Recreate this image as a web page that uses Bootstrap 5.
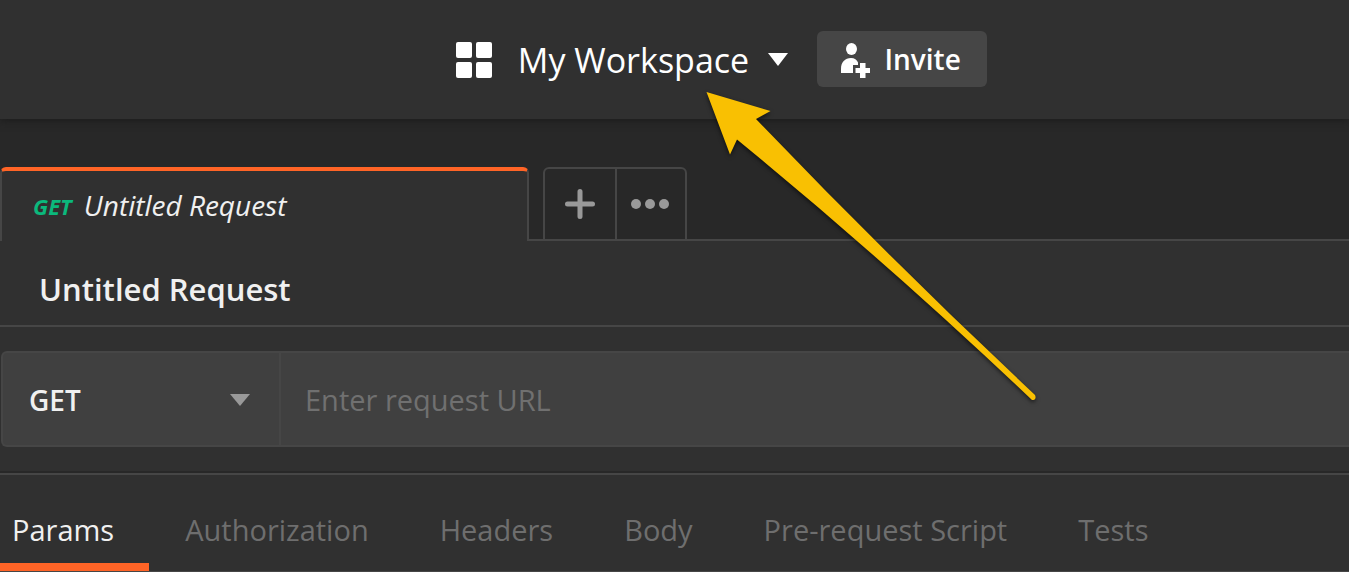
<!DOCTYPE html>
<html lang="en">
<head>
<meta charset="utf-8">
<meta name="viewport" content="width=device-width, initial-scale=1">
<title>My Workspace</title>
<link href="https://cdn.jsdelivr.net/npm/bootstrap@5.3.0/dist/css/bootstrap.min.css" rel="stylesheet">
<style>
  body { background: #303030; color: #f0f0f0; font-family: "Open Sans", "Noto Sans", sans-serif; font-size: 29px; line-height: 40px; overflow-x: hidden; }
  button, input, select { font: inherit; }
  .app-header { height: 119px; padding: 0 0 2px 94px; box-shadow: 0 1px 8px #1a1a1a; z-index: 1; }
  .workspace-btn { color: #fff; font-size: 34px; line-height: 48px; gap: 19px; padding-top: 2px; }
  .workspace-btn .grid-icon { margin-right: 7px; }
  .invite-btn { background: #464646; color: #fff; font-size: 28px; font-weight: 600; height: 56px; width: 170px; border-radius: 6px; margin-left: 29px; padding: 0 4px 0 0; gap: 15px; }
  .tab-strip { background: #282828; padding-top: 48px; }
  .request-tab { width: 529px; height: 74px; margin: 0; padding: 0 0 2px 31px; gap: 12px; background: #303030; border: 2px solid #464646; border-top: 4px solid #ff6426; border-bottom: 0; border-radius: 6px 6px 0 0; font-size: 28px; font-style: italic; color: #f0f0f0; }
  .request-tab .verb { color: #0bb87c; font-size: 22px; font-weight: 700; padding-top: 2px; }
  .strip-gap { width: 14px; border-bottom: 2px solid #464646; }
  .strip-actions { border: 2px solid #464646; border-radius: 6px 6px 0 0; }
  .strip-actions button { width: 70px; }
  .strip-actions button + button { border-left: 2px solid #464646 !important; }
  .request-title { height: 86px; padding: 14px 39px 0; border-bottom: 2px solid #464646; font-size: 31px; font-weight: 600; }
  .url-area { padding: 24px 0 24px 1px; border-bottom: 2px solid #282828; }
  .url-bar { height: 96px; background: #404040; border: 2px solid #464646; border-right: 0; border-radius: 6px 0 0 6px; }
  .method { width: 278px; border-right: 2px solid #464646; padding-top: 2px; }
  .method select { appearance: none; background: transparent; color: #f0f0f0; font-size: 28px; font-weight: 600; padding: 0 26px; }
  .method svg { right: 29px; }
  .url-bar input { background: transparent; color: #f0f0f0; padding: 2px 24px 0; }
  .url-bar input::placeholder { color: #707070; opacity: 1; }
  .param-tabs { border-top: 2px solid #464646; border-bottom: 1px solid #464646; height: 99px; overflow: hidden; }
  .param-tabs a { color: #6e6e6e; text-decoration: none; padding: 35px 35px 13px 36px; border-bottom: 8px solid transparent; white-space: nowrap; }
  .param-tabs a.active { color: #f0f0f0; padding-left: 12px; border-color: #ff6426; }
  .pointer-arrow { left: 700px; top: 85px; z-index: 5; filter: drop-shadow(0 2px 2px #0009); pointer-events: none; }
</style>
</head>
<body>
<header class="app-header d-flex align-items-center justify-content-center position-relative">
  <button class="workspace-btn btn px-0 pb-0 border-0 d-flex align-items-center" type="button">
    <svg class="grid-icon" width="36" height="36" fill="#fff" aria-hidden="true"><rect width="16" height="16" rx="2"/><rect x="20" width="16" height="16" rx="2"/><rect y="20" width="16" height="16" rx="2"/><rect x="20" y="20" width="16" height="16" rx="2"/></svg>
    <span>My Workspace</span>
    <svg width="20" height="13" fill="#fff" aria-hidden="true"><path d="M0 0H20L10 13Z"/></svg>
  </button>
  <button class="invite-btn btn border-0 d-flex align-items-center justify-content-center" type="button">
    <svg width="30" height="36" overflow="visible" fill="#fff" aria-hidden="true"><ellipse cx="11.500" cy="8" rx="5.500" ry="6"/><path d="M1 32V28C1 21 5 17 11 17C14.500 17 17 19 18 21.500V24H13V32Z"/><path d="M20 22H25.500V27H30V32H25.500V37H20V32H15.500V27H20Z"/></svg>
    <span>Invite</span>
  </button>
</header>
<main>
  <div class="tab-strip d-flex">
    <button class="request-tab d-flex align-items-center" type="button"><span class="verb">GET</span><span>Untitled Request</span></button>
    <div class="strip-gap"></div>
    <div class="strip-actions d-flex">
      <button class="btn p-0 border-0 rounded-0" type="button" aria-label="New tab"><svg class="d-block mx-auto" width="30" height="30" stroke="#999" stroke-width="5" stroke-linecap="round"><path d="M15 2.500V27.500M2.500 15H27.500"/></svg></button>
      <button class="btn p-0 border-0 rounded-0" type="button" aria-label="More options"><svg class="d-block mx-auto" width="40" height="10" fill="#999"><circle cx="5" cy="5" r="5"/><circle cx="19" cy="5" r="5"/><circle cx="33" cy="5" r="5"/></svg></button>
    </div>
    <div class="strip-gap flex-grow-1"></div>
  </div>
  <h1 class="request-title d-flex align-items-center m-0">Untitled Request</h1>
  <div class="url-area">
    <div class="url-bar d-flex">
      <div class="method position-relative d-flex align-items-center flex-shrink-0">
        <select class="w-100 h-100 border-0" aria-label="Method"><option>GET</option><option>POST</option></select>
        <svg class="position-absolute" width="20" height="12" fill="#999" aria-hidden="true"><path d="M0 0H20L10 12Z"/></svg>
      </div>
      <input class="flex-grow-1 border-0" type="text" placeholder="Enter request URL" aria-label="Request URL">
    </div>
  </div>
  <nav class="param-tabs d-flex">
    <a class="active" href="#">Params</a><a href="#">Authorization</a><a href="#">Headers</a><a href="#">Body</a><a href="#">Pre-request Script</a><a href="#">Tests</a>
  </nav>
</main>
<svg class="pointer-arrow position-absolute" width="345" height="325" fill="#f9c002" aria-hidden="true"><path d="M6.500 7L70.500 26L56 34Q192 176 335 310Q337 315 332 315Q190 180 37 54.500L30 69.500Z"/></svg>
<script src="https://cdn.jsdelivr.net/npm/bootstrap@5.3.0/dist/js/bootstrap.bundle.min.js"></script>
</body>
</html>
